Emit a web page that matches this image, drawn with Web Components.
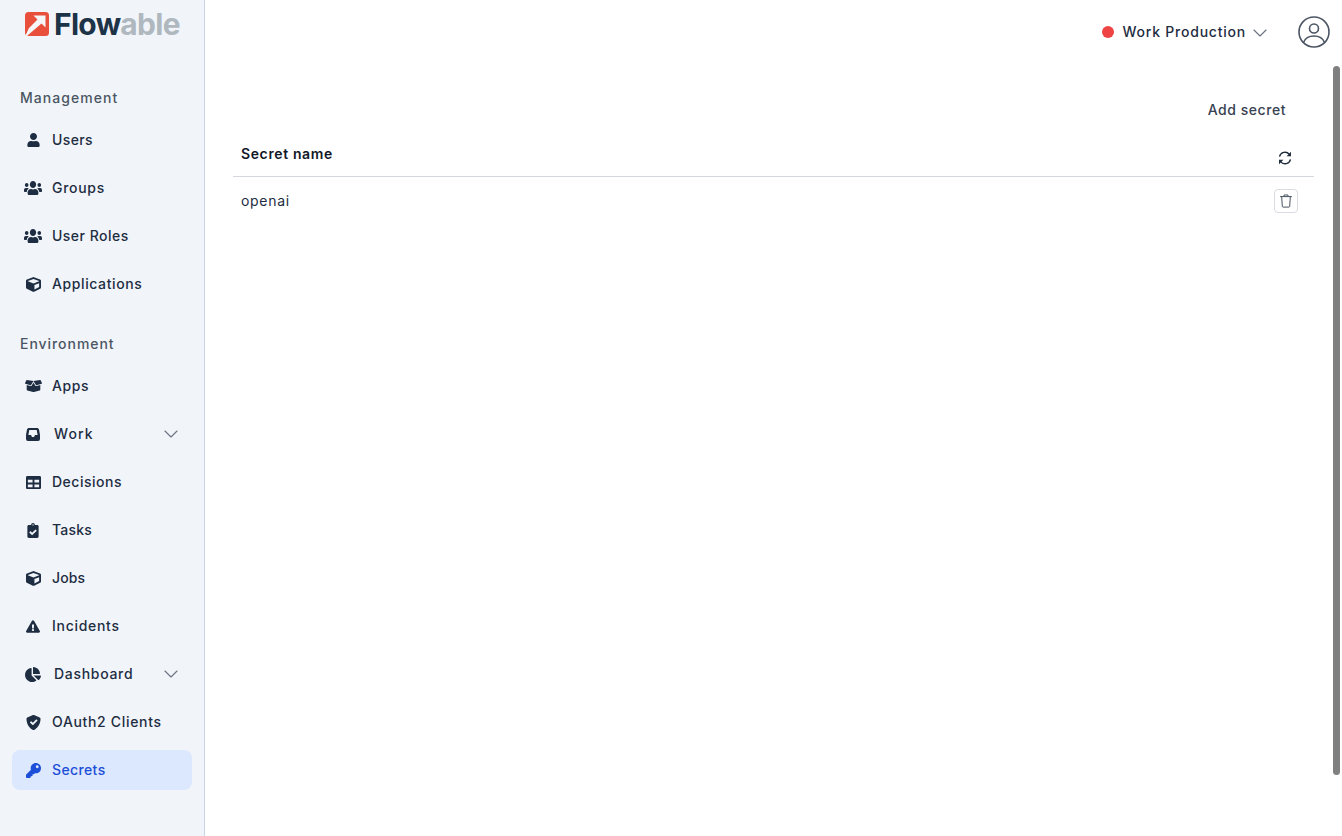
<!DOCTYPE html>
<html lang="en"><head><meta charset="utf-8"><title>Flowable Secrets</title>
<style>html,body{margin:0;height:100%;overflow:hidden;background:#fff;font-family:Inter,"Liberation Sans",sans-serif}</style>
</head><body>
<flow-app>
  <flow-sidebar slot="side">
    <flow-logo></flow-logo>
    <nav-label style="margin-top:40px;letter-spacing:1.050px">Management</nav-label>
    <nav-item icon="user">Users</nav-item>
    <nav-item icon="users" style="letter-spacing:.7px">Groups</nav-item>
    <nav-item icon="users" style="letter-spacing:.48px">User Roles</nav-item>
    <nav-item icon="cube" style="letter-spacing:.6px">Applications</nav-item>
    <nav-label style="margin-top:22px;letter-spacing:.95px">Environment</nav-label>
    <nav-item icon="box" style="letter-spacing:.6px">Apps</nav-item>
    <nav-item icon="inbox" expand style="letter-spacing:1.100px">Work</nav-item>
    <nav-item icon="table" style="letter-spacing:.5px">Decisions</nav-item>
    <nav-item icon="task" style="letter-spacing:.2px">Tasks</nav-item>
    <nav-item icon="cube" style="letter-spacing:.1px">Jobs</nav-item>
    <nav-item icon="warn" style="letter-spacing:.7px">Incidents</nav-item>
    <nav-item icon="pie" expand style="letter-spacing:.7px">Dashboard</nav-item>
    <nav-item icon="shield" style="letter-spacing:.67px">OAuth2 Clients</nav-item>
    <nav-item icon="key" active>Secrets</nav-item>
  </flow-sidebar>
  <flow-main slot="main">
    <top-bar></top-bar>
    <secrets-table></secrets-table>
  </flow-main>
</flow-app>
<script>
const ICONS={
user:['0 0 448 512','M224 256c70.7 0 128-57.3 128-128S294.7 0 224 0 96 57.3 96 128s57.3 128 128 128zm89.6 32h-16.7c-22.2 10.2-46.9 16-72.9 16s-50.6-5.8-72.9-16h-16.7C60.2 288 0 348.2 0 422.4V464c0 26.5 21.5 48 48 48h352c26.5 0 48-21.5 48-48v-41.6c0-74.2-60.2-134.4-134.4-134.4z',13,14],
users:['0 32 640 448','M96 224c35.3 0 64-28.7 64-64s-28.7-64-64-64-64 28.7-64 64 28.7 64 64 64zm448 0c35.3 0 64-28.7 64-64s-28.7-64-64-64-64 28.7-64 64 28.7 64 64 64zm32 32h-64c-17.6 0-33.5 7.1-45.1 18.6 40.3 22.1 68.9 62 75.1 109.4h66c17.7 0 32-14.3 32-32v-32c0-35.3-28.7-64-64-64zm-256 0c61.9 0 112-50.1 112-112S381.9 32 320 32 208 82.1 208 144s50.1 112 112 112zm76.8 32h-8.3c-20.8 10-43.9 16-68.5 16s-47.6-6-68.5-16h-8.3C179.6 288 128 339.6 128 403.2V432c0 26.5 21.5 48 48 48h288c26.5 0 48-21.5 48-48v-28.8c0-63.6-51.6-115.2-115.2-115.2zm-223.7-13.4C161.5 263.1 145.6 256 128 256H64c-35.3 0-64 28.7-64 64v32c0 17.7 14.3 32 32 32h65.9c6.3-47.4 34.9-87.3 75.2-109.4z',18,14,1],
cube:['0 0 512 512','M239.1 6.3l-208 78c-18.7 7-31.1 25-31.1 45v225.1c0 18.2 10.3 34.8 26.5 42.9l208 104c13.5 6.8 29.4 6.8 42.9 0l208-104c16.3-8.1 26.5-24.8 26.5-42.9V129.3c0-20-12.4-37.9-31.1-44.9l-208-78C262 2.2 250 2.2 239.1 6.3zM256 68.4l192 72v1.1l-192 78-192-78v-1.1l192-72zm32 356V275.5l160-65v133.9l-160 80z',15,15],
box:['0 0 640 512','M425.7 256c-16.9 0-32.8-9-41.4-23.4L320 126l-64.2 106.6c-8.7 14.5-24.6 23.5-41.5 23.5-4.5 0-9-.6-13.3-1.9L64 215v178c0 14.7 10 27.5 24.2 31l216.2 54.1c10.2 2.5 20.9 2.5 31 0L551.8 424c14.2-3.6 24.2-16.4 24.2-31V215l-137 39.1c-4.3 1.3-8.8 1.9-13.3 1.9zm212.6-112.2L586.8 41c-3.1-6.2-9.8-9.8-16.7-8.9L320 64l91.7 152.1c3.8 6.3 11.4 9.3 18.5 7.3l197.9-56.5c9.9-2.9 14.7-13.9 10.2-23.1zM53.2 41L1.7 143.8c-4.6 9.2.3 20.2 10.1 23l197.9 56.5c7.1 2 14.7-1 18.5-7.3L320 64 69.800 32.100c-6.900-.8-13.500 2.700-16.600 8.900z',17,14],
inbox:['0 0 14 13','M3 0h8c1 0 1.700.6 2 1.500L14 7v4a2 2 0 0 1-2 2H2a2 2 0 0 1-2-2V7L1 1.500C1.300.6 2 0 3 0zM3.300 2 2.400 7H5l1 2h2l1-2h2.600L10.700 2z',14,13],
table:['0 0 512 512','M464 32H48C21.49 32 0 53.49 0 80v352c0 26.51 21.49 48 48 48h416c26.51 0 48-21.49 48-48V80c0-26.51-21.49-48-48-48zM224 416H64v-96h160v96zm0-160H64v-96h160v96zm224 160H288v-96h160v96zm0-160H288v-96h160v96z',15,15],
task:['0 0 384 512','M336 64h-80c0-35.3-28.7-64-64-64s-64 28.7-64 64H48C21.5 64 0 85.5 0 112v352c0 26.5 21.5 48 48 48h288c26.5 0 48-21.5 48-48V112c0-26.5-21.5-48-48-48zM192 40c13.3 0 24 10.7 24 24s-10.7 24-24 24-24-10.7-24-24 10.7-24 24-24zm121.2 231.8l-143 141.8c-4.7 4.7-12.3 4.6-17-.1l-82.6-83.3c-4.7-4.7-4.6-12.3.1-17L99.1 285c4.7-4.7 12.3-4.6 17 .1l46 46.4 106-105.2c4.7-4.7 12.3-4.6 17 .1l28.2 28.4c4.7 4.8 4.6 12.3-.1 17z',12,15],
warn:['0 0 576 512','M569.517 440.013C587.975 472.007 564.806 512 527.94 512H48.054c-36.937 0-59.999-40.055-41.577-71.987L246.423 23.985c18.467-32.009 64.72-31.951 83.154 0l239.94 416.028zM288 354c-25.405 0-46 20.595-46 46s20.595 46 46 46 46-20.595 46-46-20.595-46-46-46zm-43.673-165.346l7.418 136c.347 6.364 5.609 11.346 11.982 11.346h48.546c6.373 0 11.635-4.982 11.982-11.346l7.418-136c.375-6.874-5.098-12.654-11.982-12.654h-63.383c-6.884 0-12.356 5.78-11.981 12.654z',14,13],
pie:['0 0 544 512','M527.79 288H290.5l158.03 158.03c6.04 6.04 15.98 6.53 22.19.68 38.7-36.46 65.32-85.61 73.13-140.86 1.34-9.46-6.51-17.85-16.06-17.85zm-15.83-64.8C503.72 103.74 408.26 8.28 288.8.04 279.68-.59 272 7.1 272 16.24V240h223.77c9.14 0 16.82-7.68 16.19-16.8zM224 288V50.71c0-9.55-8.39-17.4-17.84-16.06C86.99 51.49-4.1 155.6.14 280.37 4.5 408.51 114.83 513.59 243.03 511.98c50.4-.63 96.97-16.87 135.26-44.03 7.9-5.6 8.42-17.23 1.57-24.08L224 288z',16,15],
shield:['0 0 512 512','M466.5 83.7l-192-80a48.15 48.15 0 0 0-36.9 0l-192 80C27.7 91.1 16 108.6 16 128c0 198.5 114.5 335.7 221.5 380.3 11.8 4.9 25.1 4.9 36.9 0C360.1 472.6 496 349.3 496 128c0-19.4-11.7-36.9-29.5-44.3zM389 200.500L245 344.500c-6.200 6.200-16.400 6.200-22.600 0l-80-80c-6.200-6.200-6.200-16.400 0-22.600l22.600-22.600c6.200-6.200 16.400-6.200 22.600 0L234 265.500l110.100-110.100c6.200-6.200 16.400-6.200 22.600 0l22.300 22.500c6.200 6.200 6.200 16.400 0 22.600z',15,15],
key:['0 0 512 512','M512 176.001C512 273.203 433.202 352 336 352c-11.22 0-22.19-1.062-32.827-3.069l-24.012 27.014A23.999 23.999 0 0 1 261.223 384H224v40c0 13.255-10.745 24-24 24h-40v40c0 13.255-10.745 24-24 24H24c-13.255 0-24-10.745-24-24v-78.059c0-6.365 2.529-12.47 7.029-16.971l161.802-161.802C163.108 213.814 160 195.271 160 176 160 78.798 238.797.001 335.999 0 433.488-.001 512 78.511 512 176.001zM336 128c0 26.51 21.49 48 48 48s48-21.49 48-48-21.49-48-48-48-48 21.49-48 48z',15,15]
};
const CHEV=(w,c)=>`<svg width="${w}" height="8" viewBox="0 0 12 7" fill="none" stroke="${c}" stroke-width="1" stroke-linecap="round" stroke-linejoin="round"><path d="M.7.9 6 6.1 11.3.9"/></svg>`;
function def(name,html,extra){
  const t=document.createElement('template');t.innerHTML=html;
  customElements.define(name,class extends HTMLElement{
    constructor(){super();this.attachShadow({mode:'open'}).appendChild(t.content.cloneNode(true));}
    connectedCallback(){extra&&extra.call(this)}
  });
}
def('flow-app',`<style>:host{display:grid;grid-template-columns:205px 1fr;height:836px;width:1342px;position:relative;overflow:hidden}
.bar{position:absolute;left:1333px;top:66px;width:7px;height:709px;border-radius:4px;background:#808080}</style>
<slot name="side"></slot><slot name="main"></slot><div class="bar"></div>`);
def('flow-sidebar',`<style>:host{display:flex;flex-direction:column;box-sizing:border-box;background:#f1f5fa;border-right:1px solid #c9d4e6;padding:0 12px;height:836px}
::slotted(nav-item){margin-bottom:8px}</style><slot></slot>`);
def('flow-logo',`<style>:host{display:flex;align-items:center;height:48px;padding-left:12px;gap:4px}
svg{display:block;flex:none;margin-top:3px}
.t{font:700 30px/48px Inter,"Liberation Sans",sans-serif;letter-spacing:-.7px;color:#1d3347;margin-top:-1px;white-space:nowrap}
.t span{color:#b0b8bf}</style>
<svg width="26" height="27" viewBox="-1 0 26 27"><rect width="24" height="24" rx="3.500" fill="#e8503c"/><path fill="#f4f6f8" d="M8.500 3.500H20.500V15.500L16.500 11.500 -1 26.500 4 16 12.500 7.500z"/></svg>
<div class="t">Flow<span>able</span></div>`);
def('nav-label',`<style>:host{display:block;font:500 14px/20px Inter,"Liberation Sans",sans-serif;letter-spacing:.38px;color:#4b5563;padding-left:8px;margin-bottom:12px}</style><slot></slot>`);
def('nav-item',`<style>:host{display:flex;align-items:center;height:40px;flex:none;border-radius:8px;color:#1e2d42;font:500 14px/20px Inter,"Liberation Sans",sans-serif;letter-spacing:.38px}
:host([active]){background:#dbe8fd;color:#1d4ed8}
.i{width:18px;height:16px;margin-left:12px;margin-right:10px;display:flex;align-items:center;justify-content:center;flex:none}
:host([expand]) .i{margin-right:12px}
svg{display:block}
.c{margin-left:auto;margin-right:14px;display:none}
:host([expand]) .c{display:block}</style>
<span class="i"></span><slot></slot><span class="c">${CHEV(14,'#6b7280')}</span>`,function(){
  const [vb,d,w,h,stretch]=ICONS[this.getAttribute('icon')];
  this.shadowRoot.querySelector('.i').innerHTML=`<svg width="${w}" height="${h}" viewBox="${vb}" ${stretch?'preserveAspectRatio="none"':''} fill="currentColor" fill-rule="evenodd"><path d="${d}"/></svg>`;
});
def('flow-main',`<style>:host{display:block;min-width:0}</style><slot></slot>`);
def('top-bar',`<style>:host{display:flex;align-items:center;justify-content:flex-end;height:64px;padding-right:12px;font:500 14px/20px Inter,"Liberation Sans",sans-serif;letter-spacing:.78px;color:#1e2d42}
.d{width:12px;height:12px;border-radius:50%;background:#ef4444;margin-right:8px}
.ch{margin:1px 31px 0 7px;display:flex}
svg{display:block}</style>
<span class="d"></span><span>Work Production</span><span class="ch">${CHEV(14,'#6b7280')}</span>
<svg width="32" height="32" viewBox="0 0 32 32" fill="none" stroke="#4b5563" stroke-width="1.600"><circle cx="16" cy="16" r="15"/><circle cx="16" cy="12.500" r="4.500"/><path d="M5.500 26.500c1.500-4 5-6.500 10.500-6.500s9 2.500 10.500 6.500"/></svg>`);
def('secrets-table',`<style>:host{display:block;margin:0 28px 0 28px;font:400 14px/20px Inter,"Liberation Sans",sans-serif;letter-spacing:.7px;color:#1e2d42}
.act{display:flex;justify-content:flex-end;padding:36px 28px 0 0;font-weight:500;color:#374151;height:20px;letter-spacing:.55px}
.head{display:flex;justify-content:space-between;align-items:flex-start;height:57px;padding:24px 22px 0 8px;border-bottom:1px solid #d4d7dc;box-sizing:border-box;font-weight:600;color:#111827;letter-spacing:.62px}
.head svg{margin-top:7px}
.row{display:flex;justify-content:space-between;align-items:center;padding:12px 16px 0 8px;height:24px}
button{all:unset;width:24px;height:24px;box-sizing:border-box;border:1px solid #d9dce1;border-radius:4px;display:flex;align-items:center;justify-content:center}
svg{display:block}</style>
<div class="act">Add secret</div>
<div class="head"><span>Secret name</span>
<svg width="14" height="14" viewBox="0 0 14 14" fill="none" stroke="#1f2d3d" stroke-width="1.400"><path d="M1.500 5.600A5.600 5.600 0 0 1 11.400 3.400"/><path d="M12.500 8.400A5.600 5.600 0 0 1 2.600 10.600"/><path fill="#1f2d3d" stroke="none" d="M13 .8v4.400H8.600zM1 13.200V8.800h4.400z"/></svg></div>
<div class="row"><span>openai</span><button aria-label="Delete"><svg width="12" height="14" viewBox="0 0 12 14" fill="none" stroke="#4b5563" stroke-width="1" stroke-linejoin="round" stroke-linecap="round"><path d="M.5 2.600h11M4 2.400V1h4v1.400M1.700 2.800l.6 9.600c0 .4.300.7.700.7h6c.4 0 .7-.3.700-.7l.6-9.600"/></svg></button></div>`);
</script>
</body></html>
